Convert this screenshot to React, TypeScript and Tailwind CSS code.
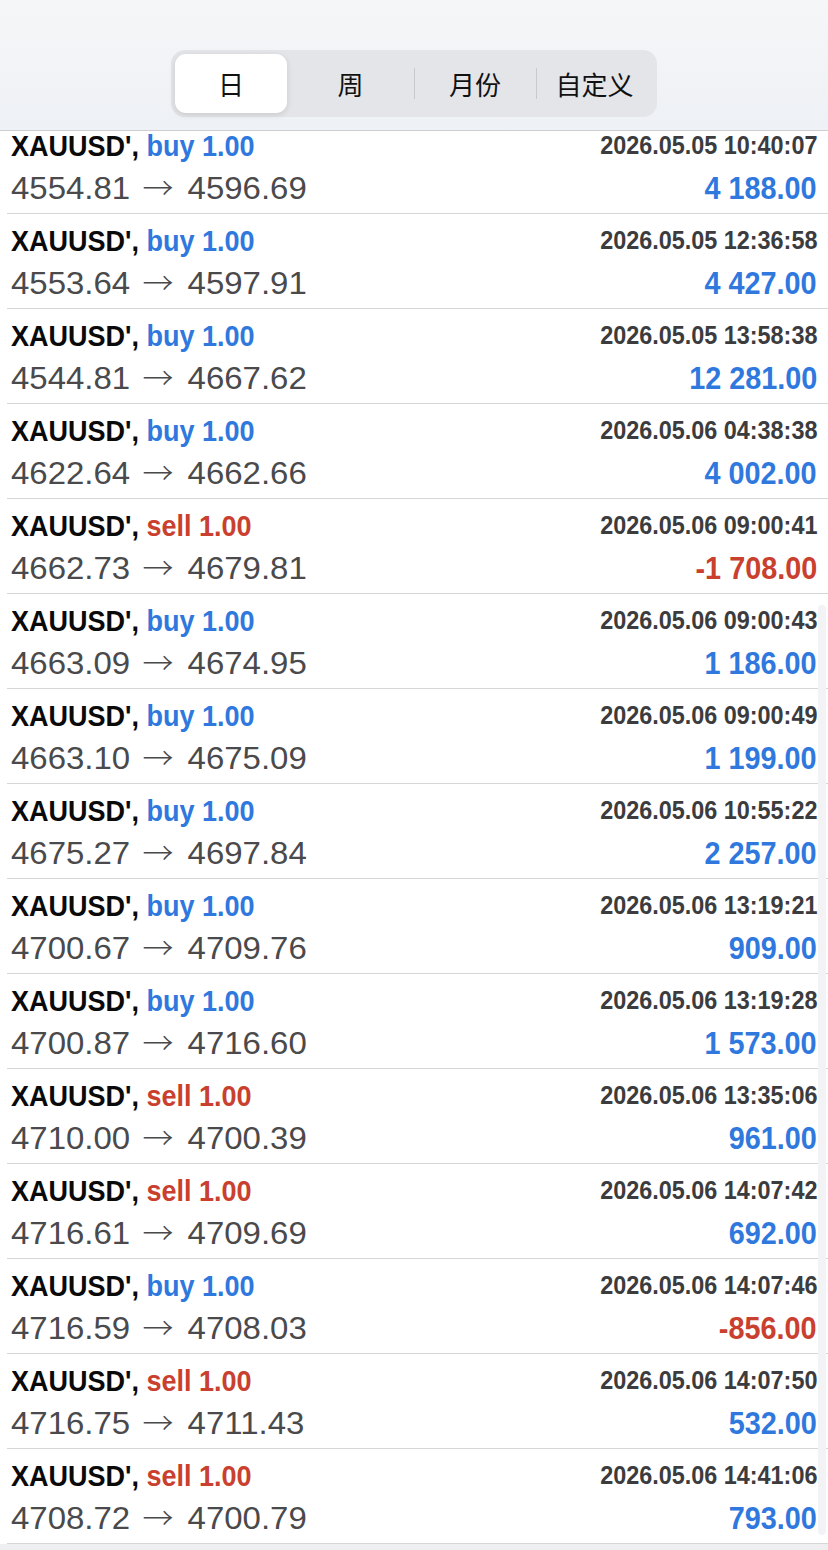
import React from 'react';

type Deal = {
  side: 'buy' | 'sell';
  time: string;
  open: string;
  close: string;
  profit: string;
};

const deals: Deal[] = [
  { side: 'buy', time: '2026.05.05 10:40:07', open: '4554.81', close: '4596.69', profit: '4 188.00' },
  { side: 'buy', time: '2026.05.05 12:36:58', open: '4553.64', close: '4597.91', profit: '4 427.00' },
  { side: 'buy', time: '2026.05.05 13:58:38', open: '4544.81', close: '4667.62', profit: '12 281.00' },
  { side: 'buy', time: '2026.05.06 04:38:38', open: '4622.64', close: '4662.66', profit: '4 002.00' },
  { side: 'sell', time: '2026.05.06 09:00:41', open: '4662.73', close: '4679.81', profit: '-1 708.00' },
  { side: 'buy', time: '2026.05.06 09:00:43', open: '4663.09', close: '4674.95', profit: '1 186.00' },
  { side: 'buy', time: '2026.05.06 09:00:49', open: '4663.10', close: '4675.09', profit: '1 199.00' },
  { side: 'buy', time: '2026.05.06 10:55:22', open: '4675.27', close: '4697.84', profit: '2 257.00' },
  { side: 'buy', time: '2026.05.06 13:19:21', open: '4700.67', close: '4709.76', profit: '909.00' },
  { side: 'buy', time: '2026.05.06 13:19:28', open: '4700.87', close: '4716.60', profit: '1 573.00' },
  { side: 'sell', time: '2026.05.06 13:35:06', open: '4710.00', close: '4700.39', profit: '961.00' },
  { side: 'sell', time: '2026.05.06 14:07:42', open: '4716.61', close: '4709.69', profit: '692.00' },
  { side: 'buy', time: '2026.05.06 14:07:46', open: '4716.59', close: '4708.03', profit: '-856.00' },
  { side: 'sell', time: '2026.05.06 14:07:50', open: '4716.75', close: '4711.43', profit: '532.00' },
  { side: 'sell', time: '2026.05.06 14:41:06', open: '4708.72', close: '4700.79', profit: '793.00' },
];

// segment widths follow the screenshot (control is mid-animation, not equal)
const tabs = [
  { label: '日', w: 'w-[112px]' },
  { label: '周', w: 'w-[127px]' },
  { label: '月份', w: 'w-[122px]' },
  { label: '自定义', w: 'flex-1' },
];

const DealRow: React.FC<{ deal: Deal }> = ({ deal }) => {
  const sideColor = deal.side === 'buy' ? 'text-[#2f78de]' : 'text-[#c9402f]';
  const profitColor = deal.profit.startsWith('-') ? 'text-[#c9402f]' : 'text-[#2f78de]';
  return (
    <div className="ml-[7px] h-[95px] border-b border-[#d6d6d8] pl-[4px] pr-[11px] flex flex-col">
      <div className="mt-[9px] h-[34px] flex items-center justify-between">
        <div className="inline-block origin-left scale-x-[0.9] text-[30px] font-bold whitespace-nowrap">
          <span className="text-[#0a0a0a]">XAUUSD',</span>{' '}
          <span className={sideColor}>{deal.side} 1.00</span>
        </div>
        <div className="inline-block origin-right scale-x-[0.9] text-[26px] font-bold text-[#3c3c3e] whitespace-nowrap">
          {deal.time}
        </div>
      </div>
      <div className="mt-[9px] h-[34px] flex items-center justify-between">
        <div className="inline-block origin-left scale-x-[1.03] text-[32px] text-[#4a4a4c] whitespace-nowrap">
          {deal.open}{' '}
          <span
            className="ml-[3px] mr-[5px] text-[30px] font-light"
            style={{ fontFamily: '"Noto Sans CJK SC", sans-serif' }}
          >
            →
          </span>{' '}
          {deal.close}
        </div>
        <div
          className={`inline-block origin-right scale-x-[0.9] text-[32px] font-bold whitespace-nowrap ${profitColor}`}
        >
          {deal.profit}
        </div>
      </div>
    </div>
  );
};

export default function App() {
  return (
    <div
      className="relative w-[828px] h-[1550px] overflow-hidden bg-[#efeff1]"
      style={{ fontFamily: '"Liberation Sans", Arial, "Noto Sans CJK SC", sans-serif' }}
    >
      <div className="relative z-10 h-[131px] border-b border-[#cfcfd2] bg-gradient-to-b from-[#f5f6f8] to-[#eef1f5] flex justify-center">
        <div className="mt-[50px] h-[67px] w-[486px] rounded-[14px] bg-[#e4e5e9] p-[4px] flex items-stretch">
          {tabs.map((t, i) => (
            <div key={t.label} className={`relative ${t.w} flex items-center justify-center`}>
              {i === 0 && (
                <div className="absolute inset-0 rounded-[11px] bg-white shadow-[0_2px_6px_rgba(0,0,0,0.12)]" />
              )}
              {i >= 2 && <div className="absolute left-0 top-[14px] bottom-[14px] w-px bg-[#c8c9cd]" />}
              <span
                className="relative text-[26px] text-[#111]"
                style={{ fontFamily: '"Noto Sans CJK SC", sans-serif' }}
              >
                {t.label}
              </span>
            </div>
          ))}
        </div>
      </div>
      <div className="bg-white">
        <div className="-mt-[12px]">
          {deals.map((d, i) => (
            <DealRow key={i} deal={d} />
          ))}
        </div>
      </div>
      <div className="absolute right-[2px] top-[605px] w-[8px] h-[930px] rounded-full bg-[#f3f3f5]" />
    </div>
  );
}
